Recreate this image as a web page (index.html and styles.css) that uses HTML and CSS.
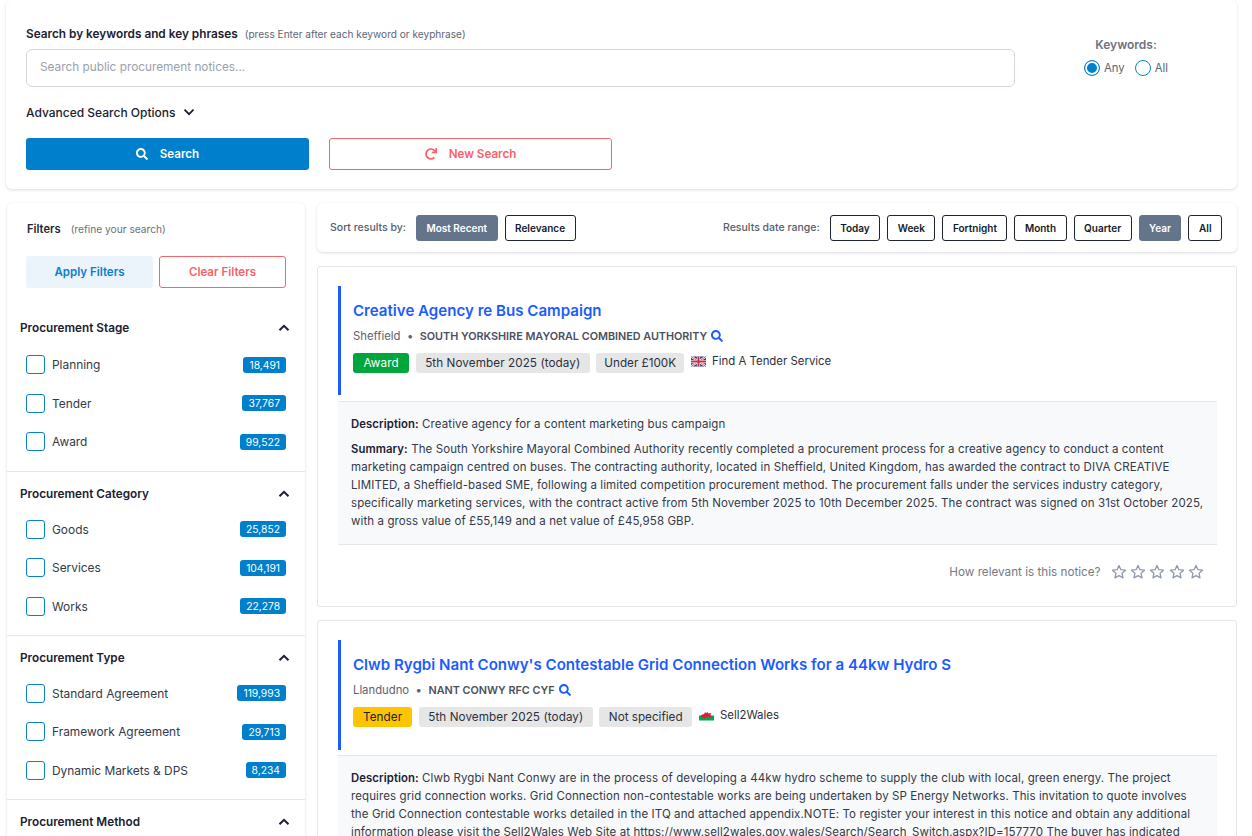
FILE: index.html
```html
<!DOCTYPE html>
<html lang="en">
<head>
<meta charset="utf-8">
<title>Search public procurement notices</title>
<link rel="stylesheet" href="styles.css">
</head>
<body>
<svg class="defs" width="0" height="0" aria-hidden="true">
  <symbol id="i-search" viewBox="0 0 512 512"><path fill="currentColor" d="M505 442.7L405.3 343c-4.5-4.5-10.6-7-17-7H372c27.6-35.3 44-79.7 44-128C416 93.1 322.9 0 208 0S0 93.1 0 208s93.1 208 208 208c48.3 0 92.7-16.4 128-44v16.3c0 6.4 2.5 12.5 7 17l99.7 99.7c9.4 9.4 24.6 9.4 33.9 0l28.3-28.3c9.4-9.4 9.4-24.6.1-34zM208 336c-70.7 0-128-57.2-128-128 0-70.7 57.2-128 128-128 70.7 0 128 57.2 128 128 0 70.7-57.2 128-128 128z"/></symbol>
  <symbol id="i-redo" viewBox="0 0 512 512"><path fill="currentColor" d="M500.33 0h-47.41a12 12 0 0 0-12 12.57l4 82.76A247.42 247.42 0 0 0 256 8C119.34 8 7.9 119.53 8 256.19 8.1 393.07 119.1 504 256 504a247.1 247.1 0 0 0 166.18-63.91 12 12 0 0 0 .48-17.43l-34-34a12 12 0 0 0-16.38-.55A176 176 0 1 1 402.1 157.8l-101.53-4.87a12 12 0 0 0-12.57 12v47.41a12 12 0 0 0 12 12h200.33a12 12 0 0 0 12-12V12a12 12 0 0 0-12-12z"/></symbol>
  <symbol id="i-up" viewBox="0 0 12 8"><path d="M1.500 6.300 6 1.800l4.500 4.500" fill="none" stroke="currentColor" stroke-width="2"/></symbol>
  <symbol id="i-down" viewBox="0 0 12 8"><path d="M1.500 1.700 6 6.200l4.500-4.500" fill="none" stroke="currentColor" stroke-width="1.800"/></symbol>
  <symbol id="i-star" viewBox="0 0 16 16"><path d="M8 1.500 9.900 5.700l4.600.5-3.400 3.100.9 4.600L8 11.600l-4 2.300.9-4.600L1.500 6.200l4.600-.5z" fill="none" stroke="currentColor" stroke-width="1.300" stroke-linejoin="round"/></symbol>
</svg>

<div class="page">
  <section class="search-card">
    <div class="search-main">
      <div class="search-label"><strong>Search by keywords and key phrases</strong><span>(press Enter after each keyword or keyphrase)</span></div>
      <div class="search-input">Search public procurement notices...</div>
      <div class="advanced">Advanced Search Options <svg class="chev-down"><use href="#i-down"/></svg></div>
      <div class="search-actions">
        <button class="btn-search"><svg class="ic13"><use href="#i-search"/></svg>Search</button>
        <button class="btn-new"><svg class="ic13"><use href="#i-redo"/></svg>New Search</button>
      </div>
    </div>
    <div class="keywords">
      <div class="keywords-title">Keywords:</div>
      <div class="keywords-opts">
        <span class="radio on"></span><span class="radio-text">Any</span>
        <span class="radio"></span><span class="radio-text">All</span>
      </div>
    </div>
  </section>

  <div class="columns">
    <aside class="filters">
      <div class="filters-head"><strong>Filters</strong><span>(refine your search)</span></div>
      <div class="filters-btns">
        <button class="btn-apply">Apply Filters</button>
        <button class="btn-clear">Clear Filters</button>
      </div>

      <div class="group">
        <div class="group-head">Procurement Stage<svg class="chev-up"><use href="#i-up"/></svg></div>
        <div class="opt"><span class="check"></span><span class="opt-name">Planning</span><span class="count">18,491</span></div>
        <div class="opt"><span class="check"></span><span class="opt-name">Tender</span><span class="count">37,767</span></div>
        <div class="opt"><span class="check"></span><span class="opt-name">Award</span><span class="count">99,522</span></div>
      </div>
      <div class="group">
        <div class="group-head">Procurement Category<svg class="chev-up"><use href="#i-up"/></svg></div>
        <div class="opt"><span class="check"></span><span class="opt-name">Goods</span><span class="count">25,852</span></div>
        <div class="opt"><span class="check"></span><span class="opt-name">Services</span><span class="count">104,191</span></div>
        <div class="opt"><span class="check"></span><span class="opt-name">Works</span><span class="count">22,278</span></div>
      </div>
      <div class="group">
        <div class="group-head">Procurement Type<svg class="chev-up"><use href="#i-up"/></svg></div>
        <div class="opt"><span class="check"></span><span class="opt-name">Standard Agreement</span><span class="count">119,993</span></div>
        <div class="opt"><span class="check"></span><span class="opt-name">Framework Agreement</span><span class="count">29,713</span></div>
        <div class="opt"><span class="check"></span><span class="opt-name">Dynamic Markets &amp; DPS</span><span class="count">8,234</span></div>
      </div>
      <div class="group">
        <div class="group-head">Procurement Method<svg class="chev-up"><use href="#i-up"/></svg></div>
      </div>
    </aside>

    <main class="results">
      <div class="sortbar">
        <span class="bar-label">Sort results by:</span>
        <button class="pill active">Most Recent</button>
        <button class="pill">Relevance</button>
        <span class="bar-label range">Results date range:</span>
        <button class="pill">Today</button>
        <button class="pill">Week</button>
        <button class="pill">Fortnight</button>
        <button class="pill">Month</button>
        <button class="pill">Quarter</button>
        <button class="pill active">Year</button>
        <button class="pill">All</button>
      </div>

      <article class="notice">
        <div class="notice-head">
          <h2>Creative Agency re Bus Campaign</h2>
          <div class="meta">Sheffield<i>•</i><b>SOUTH YORKSHIRE MAYORAL COMBINED AUTHORITY</b><svg class="ic12"><use href="#i-search"/></svg></div>
          <div class="tags">
            <span class="tag award">Award</span>
            <span class="tag">5th November 2025 (today)</span>
            <span class="tag value">Under £100K</span>
            <span class="source">
              <svg class="flag" viewBox="0 0 60 40"><rect width="60" height="40" fill="#2b3f87"/><path d="M0 0 60 40M60 0 0 40" stroke="#fff" stroke-width="8"/><path d="M0 0 60 40M60 0 0 40" stroke="#c8313e" stroke-width="3"/><path d="M30 0V40M0 20H60" stroke="#fff" stroke-width="13"/><path d="M30 0V40M0 20H60" stroke="#c8313e" stroke-width="8"/></svg>
              Find A Tender Service
            </span>
          </div>
        </div>
        <div class="desc">
          <p><b>Description:</b> Creative agency for a content marketing bus campaign</p>
          <p><b>Summary:</b> The South Yorkshire Mayoral Combined Authority recently completed a procurement process for a creative agency to conduct a content<br>marketing campaign centred on buses. The contracting authority, located in Sheffield, United Kingdom, has awarded the contract to DIVA CREATIVE<br>LIMITED, a Sheffield-based SME, following a limited competition procurement method. The procurement falls under the services industry category,<br>specifically marketing services, with the contract active from 5th November 2025 to 10th December 2025. The contract was signed on 31st October 2025,<br>with a gross value of £55,149 and a net value of £45,958 GBP.</p>
        </div>
        <div class="rate">
          <span>How relevant is this notice?</span>
          <svg class="star"><use href="#i-star"/></svg><svg class="star"><use href="#i-star"/></svg><svg class="star"><use href="#i-star"/></svg><svg class="star"><use href="#i-star"/></svg><svg class="star"><use href="#i-star"/></svg>
        </div>
      </article>

      <article class="notice">
        <div class="notice-head">
          <h2>Clwb Rygbi Nant Conwy's Contestable Grid Connection Works for a 44kw Hydro S</h2>
          <div class="meta">Llandudno<i>•</i><b>NANT CONWY RFC CYF</b><svg class="ic12"><use href="#i-search"/></svg></div>
          <div class="tags">
            <span class="tag tender">Tender</span>
            <span class="tag">5th November 2025 (today)</span>
            <span class="tag value">Not specified</span>
            <span class="source">
              <svg class="flag" viewBox="0 0 60 40"><rect width="60" height="20" fill="#fff"/><rect y="20" width="60" height="20" fill="#00a651"/><path d="M8 20c4-6 8-4 12-5l4-8 6 3 4-4 4 6 8-2 4 4-6 3 6 5-5 7-8-4-12 3-5 5-4-7-8 1z" fill="#d5202e"/></svg>
              Sell2Wales
            </span>
          </div>
        </div>
        <div class="desc">
          <p><b>Description:</b> Clwb Rygbi Nant Conwy are in the process of developing a 44kw hydro scheme to supply the club with local, green energy. The project<br>requires grid connection works. Grid Connection non-contestable works are being undertaken by SP Energy Networks. This invitation to quote involves<br>the Grid Connection contestable works detailed in the ITQ and attached appendix.NOTE: To register your interest in this notice and obtain any additional<br>information please visit the Sell2Wales Web Site at https://www.sell2wales.gov.wales/Search/Search_Switch.aspx?ID=157770 The buyer has indicated</p>
        </div>
      </article>
    </main>
  </div>
</div>
</body>
</html>
```
FILE: styles.css
```css
* { box-sizing: border-box; }
html, body { margin: 0; height: 836px; overflow: hidden; background: #fff; }
body { font-family: Inter, "Noto Sans", "Liberation Sans", sans-serif; font-size: 11.5px; color: #1f2433; }
.defs { position: absolute; }
button { font: inherit; cursor: pointer; }
svg { display: block; flex: none; }

.page { padding: 0 15px 0 6px; }

.search-card { height: 189px; display: flex; background: #fff; border-radius: 6px; box-shadow: 0 1px 3px rgba(30,40,60,.16); padding: 27px 0 0 20px; }
.search-main { width: 989px; }
.search-label { display: flex; align-items: baseline; gap: 7px; height: 16px; line-height: 14px; }
.search-label strong { font-size: 11.8px; font-weight: 600; color: #1b2030; }
.search-label span { font-size: 10.1px; color: #5d6575; }
.search-input { margin-top: 6px; height: 38px; border: 1px solid #d2d7df; border-radius: 6px; padding: 0 13px; line-height: 35px; color: #9aa0ac; font-size: 11.8px; }
.advanced { display: flex; align-items: center; gap: 7px; margin-top: 17px; height: 16px; font-size: 12px; font-weight: 500; color: #1b2030; }
.chev-down { width: 12px; height: 8px; }
.search-actions { display: flex; gap: 20px; margin-top: 18px; }
.search-actions button { width: 283px; height: 32px; border-radius: 3px; display: flex; align-items: center; justify-content: center; gap: 12px; font-size: 11.6px; font-weight: 600; }
.ic13 { width: 12px; height: 12px; }
.btn-search { background: #0080cc; border: 0; color: #fff; }
.btn-new { background: #fff; border: 1px solid #f4656c; color: #fb5f67; }

.keywords { width: 222px; padding-top: 11px; display: flex; flex-direction: column; align-items: center; }
.keywords-title { font-size: 12px; font-weight: 600; color: #6c7280; line-height: 14px; }
.keywords-opts { display: flex; align-items: center; margin-top: 8px; height: 16px; font-size: 11.3px; color: #5b6270; }
.radio { width: 16px; height: 16px; border: 1px solid #0a85d1; border-radius: 50%; background: #fff; }
.radio.on { background: #0080cc; box-shadow: inset 0 0 0 2px #fff; }
.radio-text { margin: 0 10px 0 4px; }
.radio-text:last-child { margin-right: 0; }

.columns { display: flex; gap: 12px; margin-top: 14px; padding-left: 1px; }

.filters { width: 298px; flex: none; height: 700px; border-radius: 6px; box-shadow: 0 1px 3px rgba(30,40,60,.16); }
.filters-head { display: flex; align-items: baseline; gap: 10px; padding: 19px 0 0 20px; height: 53px; line-height: 14px; }
.filters-head strong { font-size: 11.2px; font-weight: 600; }
.filters-head span { font-size: 10.2px; color: #697080; }
.filters-btns { display: flex; gap: 6px; padding-left: 19px; }
.filters-btns button { width: 127px; height: 32px; border-radius: 3px; font-size: 11.5px; font-weight: 600; }
.btn-apply { background: #ebf3fb; border: 0; color: #0a80cc; }
.btn-clear { background: #fff; border: 1px solid #f4656c; color: #fb5f67; }

.group { padding: 0 0 0 13px; height: 164px; border-bottom: 1px solid #e4e6ea; }
.filters-btns + .group { margin-top: 32px; height: 152px; padding-top: 0; }
.group + .group { padding-top: 14px; }
.group-head { display: flex; justify-content: space-between; align-items: center; height: 16px; padding-right: 15px; font-size: 11.75px; font-weight: 600; color: #1b2030; margin-bottom: 9.5px; }
.group + .group .group-head { margin-bottom: 8px; }
.chev-up { width: 12px; height: 8px; }
.opt { display: flex; align-items: center; height: 38.5px; padding: 0 19px 0 6px; font-size: 11.9px; color: #333948; }
.check { width: 19px; height: 19px; border: 1px solid #0a80cc; border-radius: 3px; margin-right: 7px; }
.opt-name { flex: 1; }
.count { background: #0080cc; color: #fff; border-radius: 3px; font-size: 10.3px; line-height: 16px; padding: 0 6px; }

.results { flex: 1; min-width: 0; }
.sortbar { height: 49px; display: flex; align-items: center; gap: 7px; padding: 0 15px 0 13px; border-radius: 6px; box-shadow: 0 1px 3px rgba(30,40,60,.16); }
.bar-label { font-size: 10.5px; font-weight: 500; color: #565d6b; margin-right: 3px; line-height: 24px; }
.bar-label.range { margin-left: auto; }
.pill { height: 26px; padding: 0 9.5px; background: #fff; border: 1px solid #1f2433; border-radius: 3px; font-size: 10px; font-weight: 600; color: #151a2a; }
.pill.active { background: #64748b; border-color: #64748b; color: #fff; }

.notice { margin-top: 14px; border: 1px solid #e4e6ea; border-radius: 3px; padding: 19px 19px 0 20px; height: 341px; }
.notice + .notice { margin-top: 13px; height: 400px; }
.notice-head { height: 109px; border-left: 3px solid #1c5cff; padding: 15px 0 0 12px; margin-bottom: 6px; }
.notice + .notice .notice-head { height: 110px; margin-bottom: 5px; }
h2 { margin: 0; font-size: 15.1px; line-height: 20px; font-weight: 600; color: #1c5cff; white-space: nowrap; }
.meta { display: flex; align-items: center; margin-top: 7px; height: 16px; font-size: 11.3px; color: #5c6270; }
.meta i { font-style: normal; margin: 0 6.5px; }
.meta b { font-size: 10.8px; font-weight: 600; color: #4a505e; }
.ic12 { width: 12px; height: 12px; margin-left: 4px; color: #1c5cff; }
.tags { display: flex; align-items: flex-start; gap: 6.5px; margin-top: 9px; }
.tag { height: 20px; line-height: 20px; padding: 0 9.5px; background: #e6e6e6; border-radius: 3px; font-size: 11.7px; letter-spacing: .08px; color: #2b3040; }
.tag.value { padding: 0 8px; letter-spacing: 0; }
.tag.tender ~ .tag.value { padding: 0 9.5px; }
.tag.award { background: #00a63c; color: #fff; padding: 0 10.5px; }
.tag.tender { background: #ffc400; color: #1b2030; padding: 0 10px; }
.source { display: flex; align-items: center; gap: 6px; height: 16px; font-size: 11.4px; color: #2b3040; margin-left: .5px; }
.flag { width: 15px; height: 11px; }

.desc { background: #f8f9fb; border-top: 1px solid #e4e6ea; border-bottom: 1px solid #e4e6ea; padding: 13px 12px 5px 13px; height: 144px; }
.notice + .notice .desc { height: auto; }
.desc p { margin: 0 0 7px; font-size: 11.5px; letter-spacing: .1px; line-height: 18px; color: #333948; white-space: nowrap; }
.desc b { font-size: 11.3px; font-weight: 600; color: #1b2030; }

.rate { display: flex; justify-content: flex-end; align-items: center; gap: 3.3px; padding: 18px 13px 0 0; color: #747a88; font-size: 11.7px; height: 36px; }
.rate span { margin-right: 7px; }
.star { width: 16px; height: 16px; color: #8f99ad; }
```
